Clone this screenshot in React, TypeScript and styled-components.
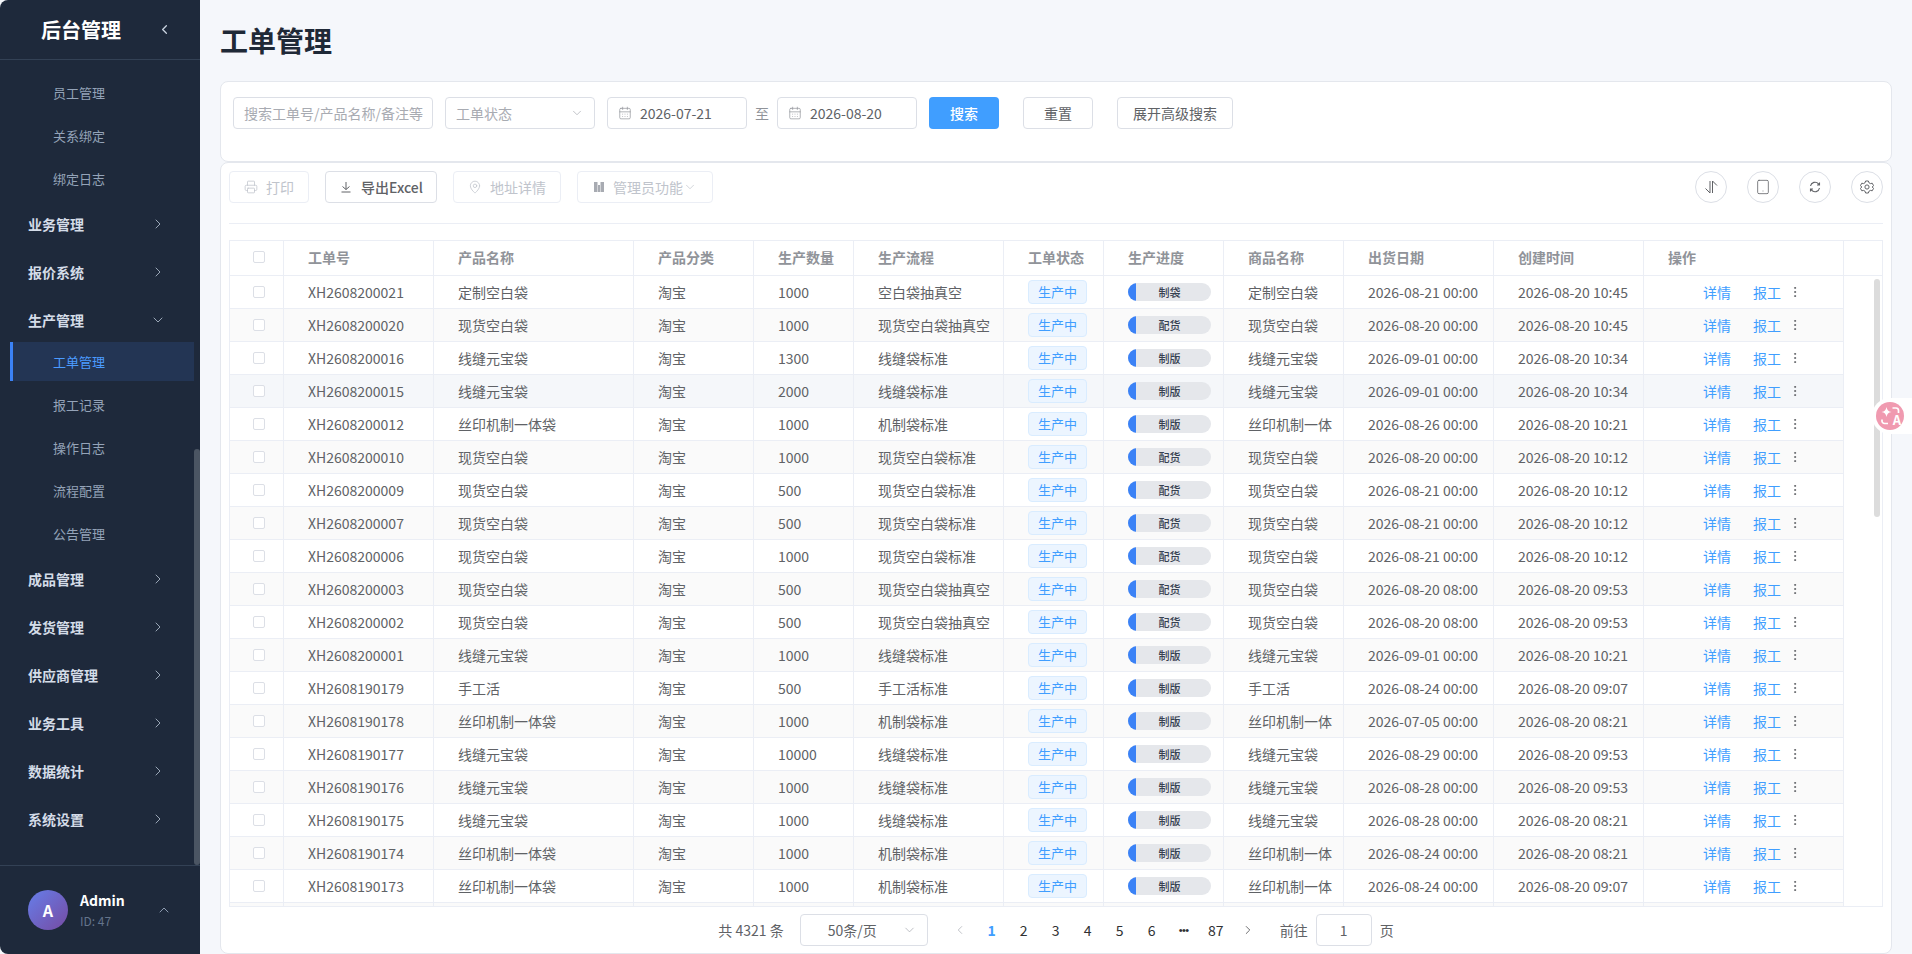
import styled, { createGlobalStyle } from "styled-components";
import {
  CalendarDays,
  ChevronDown,
  ChevronLeft,
  ChevronRight,
  ChevronUp,
  EllipsisVertical,
  MapPin,
  Printer,
  Tablet,
} from "lucide-react";

type Row = [string, string, string, string, string, string, string, string];

const BAG = "现货空白袋";
const SEAM = "线缝元宝袋";
const SILK = "丝印机制一体袋";
const SILK_SHORT = "丝印机制一体";

const rows: Row[] = [
  ["XH2608200021", "定制空白袋", "1000", "空白袋抽真空", "制袋", "定制空白袋", "2026-08-21 00:00", "2026-08-20 10:45"],
  ["XH2608200020", BAG, "1000", "现货空白袋抽真空", "配货", BAG, "2026-08-20 00:00", "2026-08-20 10:45"],
  ["XH2608200016", SEAM, "1300", "线缝袋标准", "制版", SEAM, "2026-09-01 00:00", "2026-08-20 10:34"],
  ["XH2608200015", SEAM, "2000", "线缝袋标准", "制版", SEAM, "2026-09-01 00:00", "2026-08-20 10:34"],
  ["XH2608200012", SILK, "1000", "机制袋标准", "制版", SILK_SHORT, "2026-08-26 00:00", "2026-08-20 10:21"],
  ["XH2608200010", BAG, "1000", "现货空白袋标准", "配货", BAG, "2026-08-20 00:00", "2026-08-20 10:12"],
  ["XH2608200009", BAG, "500", "现货空白袋标准", "配货", BAG, "2026-08-21 00:00", "2026-08-20 10:12"],
  ["XH2608200007", BAG, "500", "现货空白袋标准", "配货", BAG, "2026-08-21 00:00", "2026-08-20 10:12"],
  ["XH2608200006", BAG, "1000", "现货空白袋标准", "配货", BAG, "2026-08-21 00:00", "2026-08-20 10:12"],
  ["XH2608200003", BAG, "500", "现货空白袋抽真空", "配货", BAG, "2026-08-20 08:00", "2026-08-20 09:53"],
  ["XH2608200002", BAG, "500", "现货空白袋抽真空", "配货", BAG, "2026-08-20 08:00", "2026-08-20 09:53"],
  ["XH2608200001", SEAM, "1000", "线缝袋标准", "制版", SEAM, "2026-09-01 00:00", "2026-08-20 10:21"],
  ["XH2608190179", "手工活", "500", "手工活标准", "制版", "手工活", "2026-08-24 00:00", "2026-08-20 09:07"],
  ["XH2608190178", SILK, "1000", "机制袋标准", "制版", SILK_SHORT, "2026-07-05 00:00", "2026-08-20 08:21"],
  ["XH2608190177", SEAM, "10000", "线缝袋标准", "制版", SEAM, "2026-08-29 00:00", "2026-08-20 09:53"],
  ["XH2608190176", SEAM, "1000", "线缝袋标准", "制版", SEAM, "2026-08-28 00:00", "2026-08-20 09:53"],
  ["XH2608190175", SEAM, "1000", "线缝袋标准", "制版", SEAM, "2026-08-28 00:00", "2026-08-20 08:21"],
  ["XH2608190174", SILK, "1000", "机制袋标准", "制版", SILK_SHORT, "2026-08-24 00:00", "2026-08-20 08:21"],
  ["XH2608190173", SILK, "1000", "机制袋标准", "制版", SILK_SHORT, "2026-08-24 00:00", "2026-08-20 09:07"],
];

const colWidths = [54, 150, 200, 120, 100, 150, 100, 120, 120, 150, 150, 200, 39];
const heads = ["工单号", "产品名称", "产品分类", "生产数量", "生产流程", "工单状态", "生产进度", "商品名称", "出货日期", "创建时间", "操作"];

const App = () => {
  return (
    <>
      <GlobalStyle />
      <Page>
        <Sidebar>
          <Brand>
            <BrandName>后台管理</BrandName>
            <ChevronLeft size={15} strokeWidth={2} />
          </Brand>
          <Nav>
            <SubItem>员工管理</SubItem>
            <SubItem>关系绑定</SubItem>
            <SubItem>绑定日志</SubItem>
            <GroupItem>业务管理<ChevronRight size={16} strokeWidth={1.4} /></GroupItem>
            <GroupItem>报价系统<ChevronRight size={16} strokeWidth={1.4} /></GroupItem>
            <GroupItem $open>生产管理<ChevronDown size={16} strokeWidth={1.4} /></GroupItem>
            <SubItem $active>工单管理</SubItem>
            <SubItem>报工记录</SubItem>
            <SubItem>操作日志</SubItem>
            <SubItem>流程配置</SubItem>
            <SubItem>公告管理</SubItem>
            <GroupItem>成品管理<ChevronRight size={16} strokeWidth={1.4} /></GroupItem>
            <GroupItem>发货管理<ChevronRight size={16} strokeWidth={1.4} /></GroupItem>
            <GroupItem>供应商管理<ChevronRight size={16} strokeWidth={1.4} /></GroupItem>
            <GroupItem>业务工具<ChevronRight size={16} strokeWidth={1.4} /></GroupItem>
            <GroupItem>数据统计<ChevronRight size={16} strokeWidth={1.4} /></GroupItem>
            <GroupItem>系统设置<ChevronRight size={16} strokeWidth={1.4} /></GroupItem>
            <NavThumb />
          </Nav>
          <UserBar>
            <Avatar>A</Avatar>
            <UserInfo>
              <UserName>Admin</UserName>
              <UserId>ID: 47</UserId>
            </UserInfo>
            <ChevronUp size={16} strokeWidth={1.4} />
          </UserBar>
        </Sidebar>

        <Main>
          <Title>工单管理</Title>

          <SearchCard>
            <Field $w={200}><Placeholder>搜索工单号/产品名称/备注等</Placeholder></Field>
            <Field $w={150}>
              <Placeholder>工单状态</Placeholder>
              <FieldArrow><ChevronDown size={14} strokeWidth={1.2} /></FieldArrow>
            </Field>
            <Field $w={140}>
              <CalendarDays size={14} strokeWidth={1.2} color="#909399" />
              <FieldValue>2026-07-21</FieldValue>
            </Field>
            <RangeText>至</RangeText>
            <Field $w={140}>
              <CalendarDays size={14} strokeWidth={1.2} color="#909399" />
              <FieldValue>2026-08-20</FieldValue>
            </Field>
            <PrimaryButton>搜索</PrimaryButton>
            <PlainButton $w={70}>重置</PlainButton>
            <PlainButton $w={116}>展开高级搜索</PlainButton>
          </SearchCard>

          <TableCard>
            <Toolbar>
              <ToolButton $w={80} disabled><Printer size={14} strokeWidth={1.3} />打印</ToolButton>
              <ToolButton $w={112}>
                <svg width="14" height="14" viewBox="0 0 14 14" fill="none" stroke="#606266" strokeWidth="1">
                  <path d="M7 2v7.500M3.500 6.500 7 9.500l3.500-3M2.500 12h9" />
                </svg>
                <strong>导出Excel</strong>
              </ToolButton>
              <ToolButton $w={108} disabled><MapPin size={14} strokeWidth={1.3} />地址详情</ToolButton>
              <ToolButton $w={136} disabled>
                <svg width="12" height="12" viewBox="0 0 12 12" fill="#a8abb2">
                  <path d="M1 1h3.500v10H1zM5 4h2v7H5zM7.500 1H11v10H7.500z" />
                </svg>
                <AdminLabel>管理员功能<ChevronDown size={14} strokeWidth={1.2} /></AdminLabel>
              </ToolButton>
              <ToolRight>
                <CircleButton>
                  <svg width="16" height="16" viewBox="0 0 16 16" fill="none" stroke="#606266" strokeWidth="1">
                    <path d="M7 2v12L2.500 9.500M9.500 14V2L14 6.500" />
                  </svg>
                </CircleButton>
                <CircleButton><Tablet size={16} strokeWidth={1.2} /></CircleButton>
                <CircleButton>
                  <svg width="14" height="14" viewBox="0 0 14 14" fill="none" stroke="#606266" strokeWidth="1.1">
                    <path d="M2.500 6A4.600 4.600 0 0 1 10.500 3.800L11.500 5M11.500 2.500V5H9M11.500 8A4.600 4.600 0 0 1 3.500 10.200L2.500 9M2.500 11.500V9H5" />
                  </svg>
                </CircleButton>
                <CircleButton>
                  <svg width="16" height="16" viewBox="0 0 16 16" fill="none" stroke="#606266" strokeWidth="1">
                    <path d="M6.600 2h2.800l.5 1.700 1.600.9 1.700-.4 1.300 2.300-1.200 1.500 1.200 1.500-1.300 2.300-1.700-.4-1.600.9-.5 1.700H6.600l-.5-1.700-1.600-.9-1.700.4-1.300-2.300L2.700 8 1.500 6.500l1.300-2.300 1.700.4 1.600-.9z" />
                    <circle cx="8" cy="8" r="2.100" />
                  </svg>
                </CircleButton>
              </ToolRight>
            </Toolbar>

            <TableWrap>
              <DataTable>
                <colgroup>
                  {colWidths.map((w, i) => <col key={i} style={{ width: w }} />)}
                </colgroup>
                <thead>
                  <tr>
                    <HeadCell><CheckBox /></HeadCell>
                    {heads.map((h) => <HeadCell key={h}>{h}</HeadCell>)}
                    <GutterHead />
                  </tr>
                </thead>
                <tbody>
                  {rows.map((r, i) => (
                    <BodyRow key={r[0]} $striped={i % 2 === 1} $hover={i === 3}>
                      <BodyCell><CheckBox /></BodyCell>
                      <BodyCell>{r[0]}</BodyCell>
                      <BodyCell>{r[1]}</BodyCell>
                      <BodyCell>淘宝</BodyCell>
                      <BodyCell>{r[2]}</BodyCell>
                      <BodyCell>{r[3]}</BodyCell>
                      <BodyCell><StatusTag>生产中</StatusTag></BodyCell>
                      <BodyCell>
                        <Progress>
                          <ProgressFill />
                          <ProgressText>{r[4]}</ProgressText>
                        </Progress>
                      </BodyCell>
                      <BodyCell>{r[5]}</BodyCell>
                      <BodyCell>{r[6]}</BodyCell>
                      <BodyCell>{r[7]}</BodyCell>
                      <BodyCell>
                        <Actions>
                          <ActionLink>详情</ActionLink>
                          <ActionLink>报工</ActionLink>
                          <MoreIcon><EllipsisVertical size={14} strokeWidth={1.6} /></MoreIcon>
                        </Actions>
                      </BodyCell>
                      <GutterCell />
                    </BodyRow>
                  ))}
                  <BodyRow $striped $hover={false}>
                    {colWidths.slice(0, 12).map((_, i) => <BodyCell key={i} />)}
                    <GutterCell />
                  </BodyRow>
                </tbody>
              </DataTable>
              <TableThumb />
            </TableWrap>

            <Pager>
              <PagerText>共 4321 条</PagerText>
              <PageSize>50条/页<FieldArrow><ChevronDown size={15} strokeWidth={1.2} /></FieldArrow></PageSize>
              <Pages>
                <PageNum $muted><ChevronLeft size={14} strokeWidth={1.2} /></PageNum>
                <PageNum $active>1</PageNum>
                <PageNum>2</PageNum>
                <PageNum>3</PageNum>
                <PageNum>4</PageNum>
                <PageNum>5</PageNum>
                <PageNum>6</PageNum>
                <PageEllipsis>•••</PageEllipsis>
                <PageNum>87</PageNum>
                <PageNum><ChevronRight size={14} strokeWidth={1.2} /></PageNum>
              </Pages>
              <PagerText>前往</PagerText>
              <PageInput>1</PageInput>
              <PagerText>页</PagerText>
            </Pager>
          </TableCard>
        </Main>

        <TranslateTab>
          <TranslateBadge>
            <svg width="28" height="28" viewBox="0 0 28 28" fill="#fff">
              <path d="M10.500 5c.6 3.200 1.800 4.400 5 5-3.200.6-4.400 1.800-5 5-.6-3.200-1.800-4.400-5-5 3.200-.6 4.400-1.800 5-5z" />
              <path d="M16.500 6h3.500a2.500 2.500 0 0 1 2.500 2.500V11M6 17.500V19a2.500 2.500 0 0 0 2.500 2.500H12" fill="none" stroke="#fff" strokeWidth="1.700" />
            </svg>
            <TranslateLetter>A</TranslateLetter>
          </TranslateBadge>
        </TranslateTab>
      </Page>
    </>
  );
};

export default App;

const GlobalStyle = createGlobalStyle`
  html, body {
    margin: 0;
    padding: 0;
    height: 100%;
    overflow: hidden;
    background: #f5f7fb;
    font-family: "Noto Sans CJK SC", "Noto Sans", sans-serif;
  }
  * { box-sizing: border-box; }
`;

const Page = styled.div`
  height: 954px;
  display: flex;
  position: relative;
  overflow: hidden;
`;

const Sidebar = styled.aside`
  width: 200px;
  flex: none;
  display: flex;
  flex-direction: column;
  background: #1e293b;
  border-radius: 8px 0 0 8px;
  color: #94a3b8;
`;

const Brand = styled.div`
  height: 60px;
  flex: none;
  display: flex;
  align-items: center;
  padding: 0 28px 0 41px;
  justify-content: space-between;
  border-bottom: 1px solid #334155;
  color: #cbd5e1;
`;

const BrandName = styled.div`
  font-size: 20px;
  font-weight: 700;
  color: #fff;
`;

const Nav = styled.nav`
  flex: 1;
  position: relative;
  padding-top: 13px;
  overflow: hidden;
`;

const NavThumb = styled.div`
  position: absolute;
  right: 0;
  width: 6px;
  top: 389px;
  bottom: 0;
  background: #4b5563;
  border-radius: 3px;
`;

const GroupItem = styled.div<{ $open?: boolean }>`
  height: 44px;
  margin-bottom: ${(p) => (p.$open ? "0" : "4px")};
  padding: 0 34px 0 28px;
  display: flex;
  align-items: center;
  justify-content: space-between;
  font-size: 14px;
  font-weight: 700;
  color: #d4dce8;
  svg { color: #a3afc0; }
`;

const SubItem = styled.div<{ $active?: boolean }>`
  height: 39px;
  margin: 0 6px 4px 10px;
  padding-left: ${(p) => (p.$active ? "40px" : "43px")};
  display: flex;
  align-items: center;
  font-size: 13px;
  color: ${(p) => (p.$active ? "#4b9bff" : "#94a3b8")};
  background: ${(p) => (p.$active ? "#233554" : "transparent")};
  border-left: ${(p) => (p.$active ? "3px solid #3b82f6" : "none")};
`;

const UserBar = styled.div`
  height: 89px;
  flex: none;
  display: flex;
  align-items: center;
  padding: 0 28px;
  border-top: 1px solid #334155;
`;

const Avatar = styled.div`
  width: 40px;
  height: 40px;
  border-radius: 50%;
  display: flex;
  align-items: center;
  justify-content: center;
  background: linear-gradient(135deg, #667eea, #764ba2);
  color: #fff;
  font-size: 16px;
  font-weight: 700;
`;

const UserInfo = styled.div`
  flex: 1;
  margin-left: 12px;
`;

const UserName = styled.div`
  font-size: 14px;
  line-height: 19px;
  font-weight: 700;
  color: #fff;
`;

const UserId = styled.div`
  font-size: 12px;
  line-height: 19px;
  margin-top: 1px;
  color: #64748b;
`;

const Main = styled.main`
  flex: 1;
  min-width: 0;
  display: flex;
  flex-direction: column;
  padding: 0 20px;
`;

const Title = styled.h1`
  margin: 0;
  height: 81px;
  line-height: 81px;
  font-size: 28px;
  font-weight: 700;
  color: #1f2937;
`;

const SearchCard = styled.section`
  height: 81px;
  flex: none;
  display: flex;
  align-items: flex-start;
  gap: 12px;
  padding: 15px 12px;
  background: #fff;
  border: 1px solid #e4e7ed;
  border-radius: 8px;
`;

const Field = styled.div<{ $w: number }>`
  position: relative;
  width: ${(p) => p.$w}px;
  height: 32px;
  display: flex;
  align-items: center;
  padding: 0 10px;
  background: #fff;
  border: 1px solid #dcdfe6;
  border-radius: 4px;
  font-size: 14px;
`;

const Placeholder = styled.span`
  color: #a8abb2;
  white-space: nowrap;
`;

const FieldValue = styled.span`
  margin-left: 8px;
  color: #606266;
`;

const FieldArrow = styled.span`
  position: absolute;
  right: 10px;
  top: 50%;
  transform: translateY(-50%);
  display: flex;
  color: #a8abb2;
`;

const RangeText = styled.span`
  width: 14px;
  margin: 0 -4px;
  line-height: 32px;
  font-size: 14px;
  color: #909399;
`;

const PrimaryButton = styled.button`
  width: 70px;
  height: 32px;
  border: none;
  border-radius: 4px;
  background: #409eff;
  color: #fff;
  font: inherit;
  font-size: 14px;
  font-weight: 500;
`;

const PlainButton = styled.button<{ $w: number }>`
  width: ${(p) => p.$w}px;
  height: 32px;
  margin-left: 12px;
  border: 1px solid #dcdfe6;
  border-radius: 4px;
  background: #fff;
  color: #606266;
  font: inherit;
  font-size: 14px;
  padding: 0;
`;

const TableCard = styled.section`
  flex: 1;
  min-height: 0;
  display: flex;
  flex-direction: column;
  padding: 8px 8px 0;
  background: #fff;
  border: 1px solid #e4e7ed;
  border-radius: 8px;
`;

const Toolbar = styled.div`
  height: 53px;
  flex: none;
  display: flex;
  align-items: flex-start;
  gap: 16px;
  border-bottom: 1px solid #ebeef5;
`;

const ToolButton = styled.button<{ $w: number }>`
  width: ${(p) => p.$w}px;
  height: 32px;
  display: flex;
  align-items: center;
  justify-content: center;
  gap: 8px;
  padding: 0;
  background: #fff;
  border: 1px solid ${(p) => (p.disabled ? "#ebeef5" : "#dcdfe6")};
  border-radius: 4px;
  color: ${(p) => (p.disabled ? "#c0c4cc" : "#606266")};
  font: inherit;
  font-size: 14px;
  strong { font-weight: 500; }
`;

const AdminLabel = styled.span`
  display: flex;
  align-items: center;
`;

const ToolRight = styled.div`
  margin-left: auto;
  display: flex;
  gap: 20px;
`;

const CircleButton = styled.div`
  width: 32px;
  height: 32px;
  display: flex;
  align-items: center;
  justify-content: center;
  border: 1px solid #dcdfe6;
  border-radius: 50%;
  color: #606266;
`;

const TableWrap = styled.div`
  position: relative;
  margin-top: 16px;
  height: 667px;
  flex: none;
  overflow: hidden;
  border: 1px solid #ebeef5;
`;

const DataTable = styled.table`
  width: 1653px;
  table-layout: fixed;
  border-collapse: separate;
  border-spacing: 0;
  font-size: 14px;
`;

const HeadCell = styled.th`
  height: 35px;
  padding: 0 0 2px 24px;
  text-align: left;
  font-weight: 700;
  color: #909399;
  background: #fff;
  border-right: 1px solid #ebeef5;
  border-bottom: 1px solid #ebeef5;
  white-space: nowrap;
  &:first-child { padding-left: 23px; }
`;

const GutterHead = styled.th`
  border-bottom: 1px solid #ebeef5;
`;

const BodyRow = styled.tr<{ $striped: boolean; $hover: boolean }>`
  background: ${(p) => (p.$hover ? "#f5f7fa" : p.$striped ? "#fafafa" : "#fff")};
`;

const BodyCell = styled.td`
  height: 33px;
  padding: 0 0 1px 24px;
  color: #606266;
  border-right: 1px solid #ebeef5;
  border-bottom: 1px solid #ebeef5;
  white-space: nowrap;
  overflow: hidden;
  &:first-child { padding-left: 23px; }
`;

const GutterCell = styled.td`
  background: #fff;
`;

const CheckBox = styled.span`
  display: block;
  width: 12px;
  height: 12px;
  background: #fff;
  border: 1px solid #dcdfe6;
  border-radius: 2px;
`;

const StatusTag = styled.span`
  display: inline-flex;
  align-items: center;
  justify-content: center;
  vertical-align: middle;
  width: 59px;
  height: 24px;
  background: #ecf5ff;
  border: 1px solid #d9ecff;
  border-radius: 4px;
  color: #409eff;
  font-size: 13px;
`;

const Progress = styled.div`
  position: relative;
  width: 83px;
  height: 18px;
  overflow: hidden;
  background: #e5e7eb;
  border-radius: 9px;
`;

const ProgressFill = styled.div`
  width: 8px;
  height: 100%;
  background: #3b82f6;
`;

const ProgressText = styled.span`
  position: absolute;
  inset: 0;
  display: flex;
  align-items: center;
  justify-content: center;
  font-size: 11px;
  font-weight: 500;
  color: #374151;
`;

const Actions = styled.div`
  display: flex;
  align-items: center;
  gap: 22px;
  margin-left: 35px;
`;

const ActionLink = styled.span`
  color: #409eff;
`;

const MoreIcon = styled.span`
  display: flex;
  margin-left: -15px;
  color: #606266;
`;

const TableThumb = styled.div`
  position: absolute;
  right: 2px;
  top: 38px;
  width: 6px;
  height: 238px;
  background: #dcdcdc;
  border-radius: 3px;
`;

const Pager = styled.div`
  flex: 1;
  display: flex;
  align-items: center;
  justify-content: center;
  font-size: 14px;
  color: #606266;
`;

const PagerText = styled.span`
  white-space: nowrap;
`;

const PageSize = styled.div`
  position: relative;
  width: 128px;
  height: 32px;
  margin: 0 16px;
  padding-left: 27px;
  line-height: 30px;
  border: 1px solid #dcdfe6;
  border-radius: 4px;
`;

const Pages = styled.div`
  display: flex;
  margin-right: 16px;
`;

const PageNum = styled.div<{ $active?: boolean; $muted?: boolean }>`
  width: 32px;
  height: 32px;
  display: flex;
  align-items: center;
  justify-content: center;
  font-weight: ${(p) => (p.$active ? 700 : 400)};
  color: ${(p) => (p.$active ? "#409eff" : p.$muted ? "#a8abb2" : "#303133")};
`;

const PageEllipsis = styled(PageNum)`
  font-family: "Liberation Sans", sans-serif;
  font-size: 11px;
  letter-spacing: -0.5px;
`;

const PageInput = styled.div`
  width: 56px;
  height: 32px;
  margin: 0 8px;
  line-height: 30px;
  text-align: center;
  border: 1px solid #dcdfe6;
  border-radius: 4px;
`;

const TranslateTab = styled.div`
  position: absolute;
  top: 398px;
  right: 0;
  width: 40px;
  height: 36px;
  display: flex;
  align-items: center;
  padding-left: 4px;
  background: #fff;
  border-radius: 18px 0 0 18px;
`;

const TranslateBadge = styled.div`
  position: relative;
  width: 28px;
  height: 28px;
  border-radius: 50%;
  background: #f09ab0;
`;

const TranslateLetter = styled.span`
  position: absolute;
  right: 3px;
  bottom: 3px;
  font-size: 13px;
  line-height: 14px;
  font-weight: 700;
  color: #fff;
`;
